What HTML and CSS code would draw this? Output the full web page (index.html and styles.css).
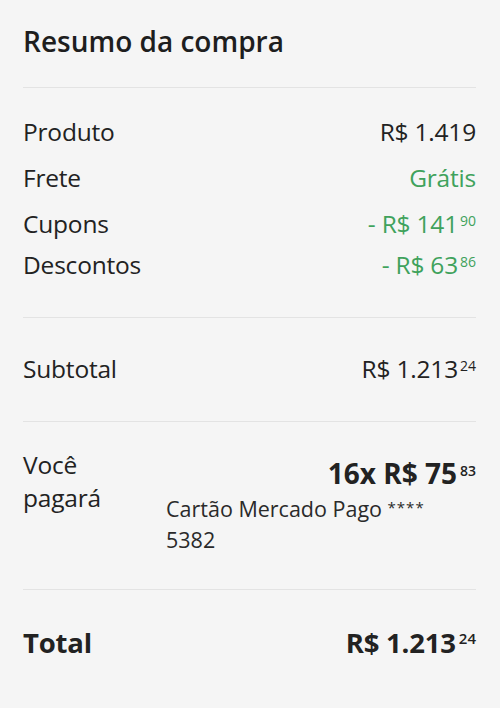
FILE: index.html
```html
<!DOCTYPE html>
<html lang="pt-BR">
<head>
<meta charset="utf-8">
<title>Resumo da compra</title>
<link rel="stylesheet" href="styles.css">
</head>
<body>
<main class="summary">
  <header class="summary-head">
    <h1 class="title">Resumo da compra</h1>
  </header>

  <section class="block block-items">
    <div class="row">
      <span class="label">Produto</span>
      <span class="value">R$ 1.419</span>
    </div>
    <div class="row">
      <span class="label">Frete</span>
      <span class="value green">Grátis</span>
    </div>
    <div class="row">
      <span class="label">Cupons</span>
      <span class="value green">- R$ 141<span class="cents">90</span></span>
    </div>
    <div class="row row-last">
      <span class="label">Descontos</span>
      <span class="value green">- R$ 63<span class="cents">86</span></span>
    </div>
  </section>

  <section class="block block-subtotal">
    <div class="row">
      <span class="label">Subtotal</span>
      <span class="value">R$ 1.213<span class="cents">24</span></span>
    </div>
  </section>

  <section class="block block-pay">
    <div class="pay">
      <span class="label pay-label">Você pagará</span>
      <div class="pay-detail">
        <span class="pay-amount">16x R$ 75<span class="cents">83</span></span>
        <span class="pay-method">Cartão Mercado Pago <span class="stars">****</span> 5382</span>
      </div>
    </div>
  </section>

  <section class="block block-total">
    <div class="row total">
      <span class="label">Total</span>
      <span class="value">R$ 1.213<span class="cents">24</span></span>
    </div>
  </section>
</main>
</body>
</html>
```

FILE: styles.css
```css
* { box-sizing: border-box; margin: 0; padding: 0; }

html, body {
  background: #f5f5f5;
}

body {
  font-family: "Open Sans", Lato, sans-serif;
  color: #222;
}

.summary {
  padding: 0 24px 0 23px;
}

.summary-head {
  padding-top: 22px;
  padding-bottom: 27px;
  border-bottom: 1px solid #e3e3e3;
}

.title {
  font-size: 28px;
  font-weight: 600;
  line-height: 38px;
  color: #1e1e1e;
}

.block {
  border-bottom: 1px solid #e3e3e3;
}

.block-items {
  padding: 29px 0 37px;
  display: flex;
  flex-direction: column;
  gap: 16px;
}

.block-items .row-last {
  margin-top: -5px;
}

.row {
  display: flex;
  justify-content: space-between;
  align-items: baseline;
  font-size: 24.5px;
  line-height: 30px;
  letter-spacing: -0.2px;
}

.green {
  color: #3fa25c;
}

.cents {
  font-size: 14px;
  vertical-align: 7px;
  margin-left: 2px;
  line-height: 0;
  letter-spacing: 0;
}

.block-subtotal {
  padding: 36px 0 37px;
}

.block-pay {
  padding: 26px 0 34px;
}

.pay {
  display: flex;
  gap: 24px;
}

.pay-label {
  width: 119px;
  flex: none;
  font-size: 24.5px;
  line-height: 33px;
  letter-spacing: -0.2px;
}

.pay-detail {
  flex: 1;
  display: flex;
  flex-direction: column;
}

.pay-amount {
  align-self: flex-end;
  font-size: 28px;
  font-weight: 700;
  line-height: 34px;
  margin-top: 8px;
}

.pay-amount .cents {
  vertical-align: 8px;
  font-weight: 600;
  margin-left: 3px;
}

.pay-method {
  font-size: 21.5px;
  line-height: 31px;
  margin-top: 2px;
  color: #2a2a2a;
  max-width: 280px;
}

.stars {
  font-size: 15px;
  vertical-align: 4px;
  letter-spacing: 1px;
}

.block-total {
  border-bottom: none;
  padding-top: 36px;
}

.total {
  font-size: 27.5px;
  font-weight: 700;
  line-height: 34px;
}

.total .cents {
  font-size: 15px;
  vertical-align: 9px;
  font-weight: 600;
  margin-left: 3px;
}
```
